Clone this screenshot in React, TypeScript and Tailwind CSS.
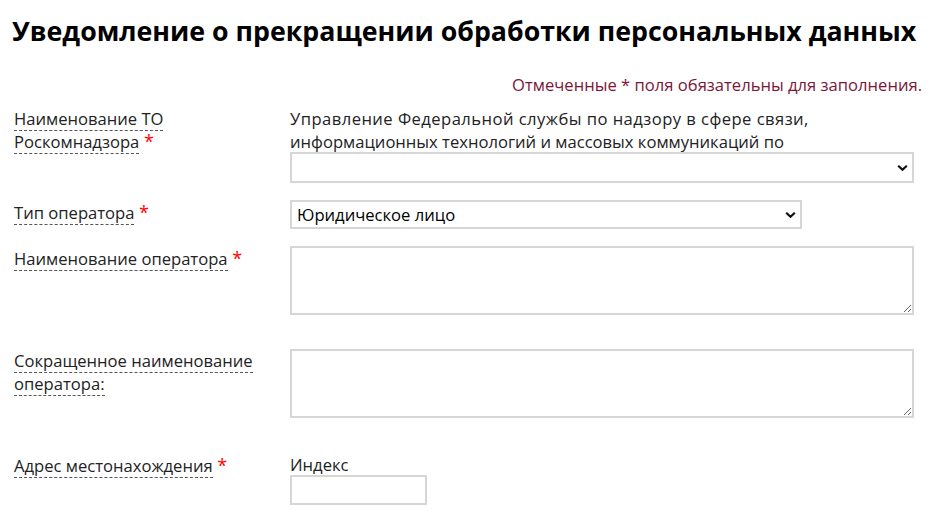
import React from "react";

const Star = () => <span className="text-[#ff0000] text-[18px]"> *</span>;

const Label = ({ children }: { children: React.ReactNode }) => (
  <span className="border-b border-dashed border-[#555]">{children}</span>
);

const Chevron = () => (
  <svg
    className="pointer-events-none absolute right-[4px] top-1/2 -translate-y-1/2"
    width="11"
    height="7"
    viewBox="0 0 11 7"
  >
    <path d="M1.2 1.2 L5.5 5.3 L9.8 1.2" fill="none" stroke="#111" strokeWidth="2.2" />
  </svg>
);

export default function App() {
  return (
    <div className="bg-white text-[#222] font-['Open_Sans',sans-serif] w-[937px] h-[513px] overflow-hidden">
      <h1 className="pl-[12px] pt-[12px] text-[26.75px] leading-[38px] font-bold text-black">
        Уведомление о прекращении обработки персональных данных
      </h1>
      <div className="mt-[23px] pr-[15px] text-right text-[16.6px] leading-[23px] text-[#7b1638]">
        Отмеченные * поля обязательны для заполнения.
      </div>
      <div className="pl-[14px] text-[16.6px] leading-[23px]">
        {/* Row 1 */}
        <div className="flex mt-[11px]">
          <div className="w-[276px] shrink-0">
            <Label>Наименование ТО</Label>
            <br />
            <Label>Роскомнадзора</Label>
            <Star />
          </div>
          <div className="w-[624px]">
            <div>
              <span className="tracking-[0.45px]">Управление Федеральной службы по надзору в сфере связи,</span>
              <br />
              информационных технологий и массовых коммуникаций по
            </div>
            <div className="relative mt-[-1px] h-[31px] w-[624px] border-2 border-[#d6d6d6] bg-white">
              <Chevron />
            </div>
          </div>
        </div>
        {/* Row 2 */}
        <div className="flex mt-[17px]">
          <div className="w-[276px] shrink-0 pt-[1px]">
            <Label>Тип оператора</Label>
            <Star />
          </div>
          <div className="relative h-[29px] w-[512px] border-2 border-[#d6d6d6] bg-white pl-[5px] leading-[25px] text-black">
            Юридическое лицо
            <Chevron />
          </div>
        </div>
        {/* Row 3 */}
        <div className="flex mt-[17px]">
          <div className="w-[276px] shrink-0 pt-[1px]">
            <Label>Наименование оператора</Label>
            <Star />
          </div>
          <textarea className="block h-[69px] w-[624px] border-2 border-[#d6d6d6] bg-white outline-none" />
        </div>
        {/* Row 4 */}
        <div className="flex mt-[34px]">
          <div className="w-[276px] shrink-0">
            <Label>Сокращенное наименование</Label>
            <br />
            <Label>оператора:</Label>
          </div>
          <textarea className="block h-[69px] w-[624px] border-2 border-[#d6d6d6] bg-white outline-none" />
        </div>
        {/* Row 5 */}
        <div className="flex mt-[36px]">
          <div className="w-[276px] shrink-0">
            <Label>Адрес местонахождения</Label>
            <Star />
          </div>
          <div>
            <div className="leading-[21px]">Индекс</div>
            <div className="h-[30px] w-[137px] border-2 border-[#d6d6d6] bg-white" />
          </div>
        </div>
      </div>
    </div>
  );
}
